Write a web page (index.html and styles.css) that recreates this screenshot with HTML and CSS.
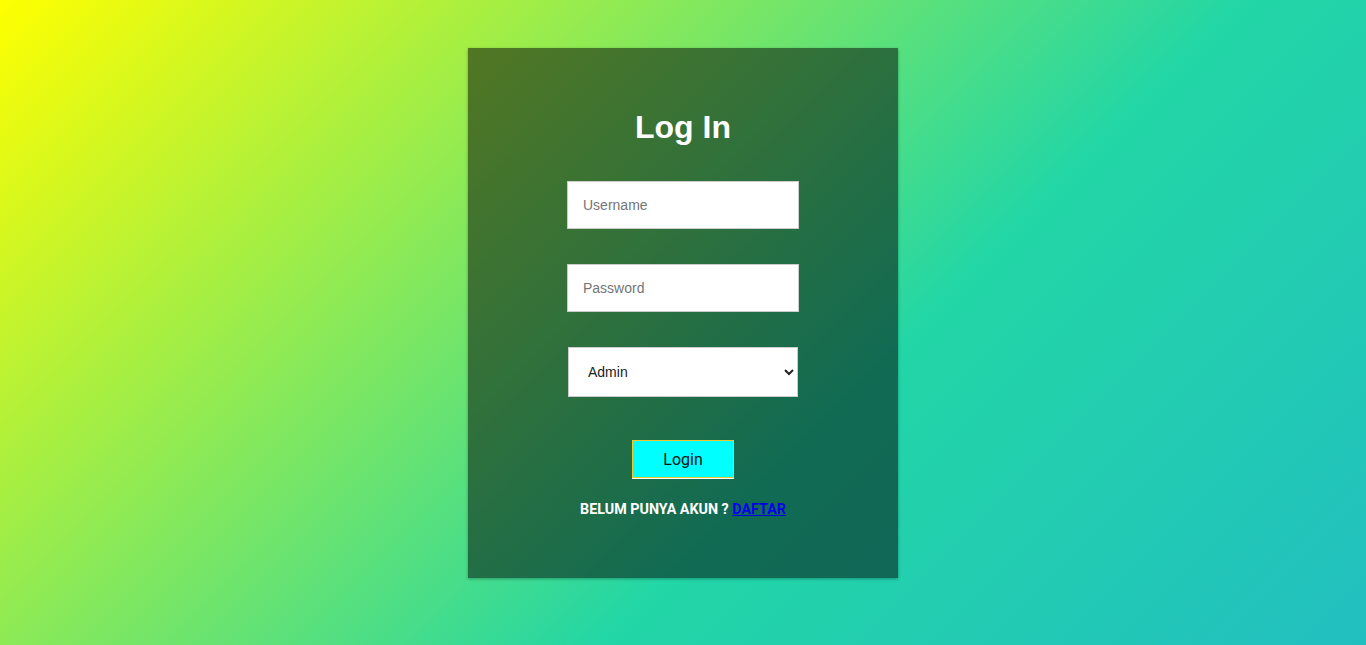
FILE: index.html
```html
<!DOCTYPE html>
<html lang="id">
<head>
<meta charset="utf-8">
<title>Log In</title>
<link rel="stylesheet" href="styles.css">
</head>
<body>
<div class="card">
  <h1 class="title">Log In</h1>
  <form class="form">
    <input class="field" type="text" placeholder="Username">
    <input class="field" type="password" placeholder="Password">
    <select class="select">
      <option>Admin</option>
      <option>User</option>
    </select>
    <button class="btn" type="button">Login</button>
    <p class="note">BELUM PUNYA AKUN ? <a href="#" class="link">DAFTAR</a></p>
  </form>
</div>
</body>
</html>
```

FILE: styles.css
```css
html, body {
  margin: 0;
  height: 100%;
}
body {
  font-family: "Liberation Sans", Arial, sans-serif;
  background: linear-gradient(135deg, #ffff00 0%, #22d6a6 62%, #22bfc0 100%);
  display: flex;
  justify-content: center;
  align-items: flex-start;
}
.card {
  margin-top: 48px;
  width: 430px;
  height: 530px;
  box-sizing: border-box;
  background: rgba(0, 0, 0, 0.5);
  box-shadow: 0 1px 3px rgba(0, 0, 0, 0.3);
  display: flex;
  flex-direction: column;
  align-items: center;
  padding-top: 62px;
}
.title {
  margin: 0;
  color: #fff;
  font-size: 32px;
  line-height: 34px;
  font-weight: bold;
}
.form {
  display: flex;
  flex-direction: column;
  align-items: center;
  margin-top: 37px;
}
.field {
  width: 232px;
  height: 48px;
  box-sizing: border-box;
  border: 1px solid #ccc;
  padding: 0 15px;
  font-family: "Liberation Sans", Arial, sans-serif;
  font-size: 14px;
  color: #333;
  margin-bottom: 35px;
  outline: none;
}
.field::placeholder {
  color: #757575;
}
.select {
  width: 230px;
  height: 50px;
  box-sizing: border-box;
  border: 1px solid #ccc;
  padding: 0 15px;
  font-family: "Liberation Sans", Arial, sans-serif;
  font-size: 14px;
  color: #222;
  background: #fff;
  border-radius: 0;
}
.btn {
  margin-top: 43px;
  width: 102px;
  height: 38px;
  box-sizing: border-box;
  background: #00ffff;
  border: 1px solid #ecc92c;
  box-shadow: 0 1px 0 #fff;
  font-family: Roboto, "Liberation Sans", sans-serif;
  font-size: 16px;
  color: #111;
  padding: 0;
}
.note {
  margin: 22px 0 0;
  color: #fff;
  font-family: Roboto, "Liberation Sans", sans-serif;
  font-weight: bold;
  font-size: 14.3px;
  line-height: 18px;
}
.link {
  color: #0000ee;
  text-decoration: underline;
}
```
